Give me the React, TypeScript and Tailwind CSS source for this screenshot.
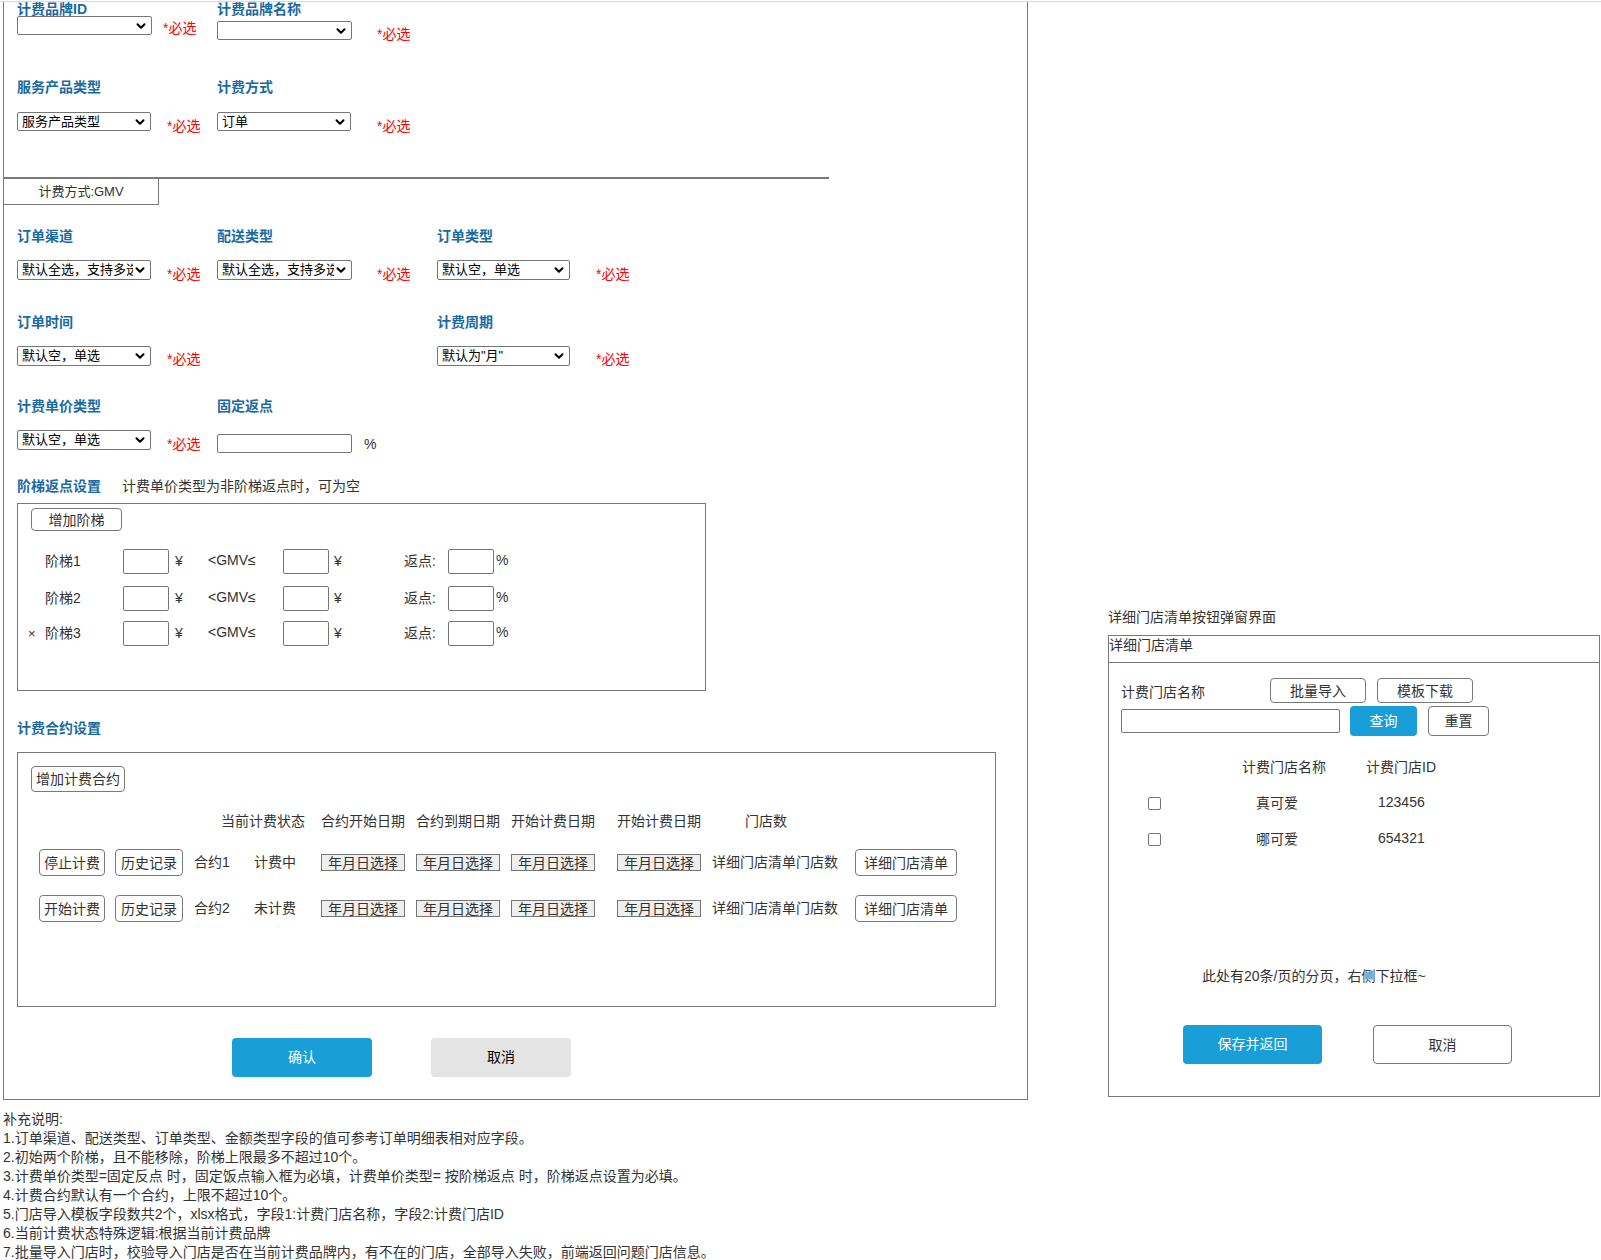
import { ChevronDown } from 'lucide-react';

const font = "font-['Liberation_Sans','Noto_Sans_CJK_SC',sans-serif]";

function Select({ text, className }: { text?: string; className: string }) {
  return (
    <div
      className={`flex items-center shrink-0 border border-[#767676] rounded-[2px] bg-white text-[13px] text-black ${className}`}
    >
      <span className="flex-1 min-w-0 overflow-hidden whitespace-nowrap pl-[4px] leading-[16px]">{text}</span>
      <ChevronDown className="w-[14px] h-[14px] shrink-0 mr-[3px] text-black" strokeWidth={3.5} />
    </div>
  );
}

function Req({ className = '' }: { className?: string }) {
  return <span className={`shrink-0 text-[14px] leading-[18px] text-[#ff0000] ${className}`}>*必选</span>;
}

function Label({ children, className = '' }: { children: React.ReactNode; className?: string }) {
  return <div className={`text-[14px] font-bold text-[#1a6aa2] ${className}`}>{children}</div>;
}

function Btn({ children, className = '' }: { children: React.ReactNode; className?: string }) {
  return (
    <div
      className={`flex items-center justify-center shrink-0 border border-[#797979] rounded-[4px] bg-white text-[14px] text-[#333333] leading-none ${className}`}
    >
      {children}
    </div>
  );
}

function DateBox() {
  return (
    <div className="flex items-center justify-center shrink-0 w-[84px] h-[17px] border border-[#767676] bg-[#efefef] text-[14px] leading-none text-[#333333]">
      年月日选择
    </div>
  );
}

function StepRow({ name, removable, className }: { name: string; removable?: boolean; className: string }) {
  return (
    <div className={`flex items-center h-[25px] text-[14px] text-[#333333] ${className}`}>
      <span className="w-[27px] pl-[10px] text-[13px]">{removable ? '×' : ''}</span>
      <span className="w-[78px]">{name}</span>
      <input className="w-[46px] h-[25px] border border-[#767676] rounded-[2px] bg-white" />
      <span className="w-[39px] pl-[6px]">¥</span>
      <span className="w-[75px] -mt-[3px]">&lt;GMV≤</span>
      <input className="w-[46px] h-[25px] border border-[#767676] rounded-[2px] bg-white" />
      <span className="w-[75px] pl-[5px]">¥</span>
      <span className="w-[44px]">返点:</span>
      <input className="w-[46px] h-[25px] border border-[#767676] rounded-[2px] bg-white" />
      <span className="pl-[2px] -mt-[3px]">%</span>
    </div>
  );
}

function ContractRow({ action, name, status, className }: { action: string; name: string; status: string; className: string }) {
  return (
    <div className={`flex items-center h-[27px] pl-[21px] text-[14px] text-[#333333] ${className}`}>
      <Btn className="w-[66px] h-[27px]">{action}</Btn>
      <Btn className="w-[68px] h-[27px] ml-[10px]">历史记录</Btn>
      <span className="w-[71px] pl-[11px] shrink-0">{name}</span>
      <span className="w-[67px] shrink-0">{status}</span>
      <DateBox />
      <span className="w-[11px] shrink-0" />
      <DateBox />
      <span className="w-[11px] shrink-0" />
      <DateBox />
      <span className="w-[22px] shrink-0" />
      <DateBox />
      <span className="w-[11px] shrink-0" />
      <span className="w-[143px] shrink-0 whitespace-nowrap">详细门店清单门店数</span>
      <Btn className="w-[102px] h-[27px]">详细门店清单</Btn>
    </div>
  );
}

const notes = [
  '补充说明:',
  '1.订单渠道、配送类型、订单类型、金额类型字段的值可参考订单明细表相对应字段。',
  '2.初始两个阶梯，且不能移除，阶梯上限最多不超过10个。',
  '3.计费单价类型=固定反点 时，固定饭点输入框为必填，计费单价类型= 按阶梯返点 时，阶梯返点设置为必填。',
  '4.计费合约默认有一个合约，上限不超过10个。',
  '5.门店导入模板字段数共2个，xlsx格式，字段1:计费门店名称，字段2:计费门店ID',
  '6.当前计费状态特殊逻辑:根据当前计费品牌',
  '7.批量导入门店时，校验导入门店是否在当前计费品牌内，有不在的门店，全部导入失败，前端返回问题门店信息。',
];

export default function App() {
  return (
    <div className={`w-[1601px] min-h-[1260px] bg-white text-[#333333] pt-px ${font}`}>
      <div className="h-px bg-[#d9d9d9]" />
      <div className="flex items-start">
        {/* main form frame */}
        <div className="ml-[3px] w-[1025px] h-[1098px] border-l border-r border-b border-[#797979] shrink-0">
          {/* row A */}
          <div className="flex h-[76px] pl-[13px]">
            <div className="w-[200px]">
              <Label className="leading-[14px]">计费品牌ID</Label>
              <div className="flex items-start">
                <Select className="w-[135px] h-[19px]" />
                <Req className="mt-[3px] ml-[11px]" />
              </div>
            </div>
            <div className="w-[220px]">
              <Label className="leading-[14px]">计费品牌名称</Label>
              <div className="flex items-start mt-[5px]">
                <Select className="w-[135px] h-[19px]" />
                <Req className="mt-[4px] ml-[25px]" />
              </div>
            </div>
          </div>

          {/* row B */}
          <div className="flex h-[99px] pl-[13px]">
            <div className="w-[200px]">
              <Label className="leading-[18px]">服务产品类型</Label>
              <div className="flex items-start mt-[16px]">
                <Select className="w-[134px] h-[19px]" text="服务产品类型" />
                <Req className="mt-[5px] ml-[16px]" />
              </div>
            </div>
            <div className="w-[220px]">
              <Label className="leading-[18px]">计费方式</Label>
              <div className="flex items-start mt-[16px]">
                <Select className="w-[134px] h-[19px]" text="订单" />
                <Req className="mt-[5px] ml-[26px]" />
              </div>
            </div>
          </div>

          <div className="h-[2px] w-[825px] bg-[#797979]" />
          <div className="flex items-center justify-center w-[155px] h-[26px] border-r border-b border-[#797979] text-[13px] text-[#333333]">
            计费方式:GMV
          </div>

          {/* row C */}
          <div className="flex h-[86px] pl-[13px] mt-[22px]">
            <div className="w-[200px]">
              <Label className="leading-[18px]">订单渠道</Label>
              <div className="flex items-start mt-[15px]">
                <Select className="w-[134px] h-[20px]" text="默认全选，支持多选" />
                <Req className="mt-[5px] ml-[16px]" />
              </div>
            </div>
            <div className="w-[220px]">
              <Label className="leading-[18px]">配送类型</Label>
              <div className="flex items-start mt-[15px]">
                <Select className="w-[135px] h-[20px]" text="默认全选，支持多选" />
                <Req className="mt-[5px] ml-[25px]" />
              </div>
            </div>
            <div className="w-[220px]">
              <Label className="leading-[18px]">订单类型</Label>
              <div className="flex items-start mt-[15px]">
                <Select className="w-[133px] h-[20px]" text="默认空，单选" />
                <Req className="mt-[5px] ml-[26px]" />
              </div>
            </div>
          </div>

          {/* row D */}
          <div className="flex h-[84px] pl-[13px]">
            <div className="w-[420px]">
              <Label className="leading-[18px]">订单时间</Label>
              <div className="flex items-start mt-[15px]">
                <Select className="w-[134px] h-[20px]" text="默认空，单选" />
                <Req className="mt-[4px] ml-[16px]" />
              </div>
            </div>
            <div className="w-[220px]">
              <Label className="leading-[18px]">计费周期</Label>
              <div className="flex items-start mt-[15px]">
                <Select className="w-[133px] h-[20px]" text={'默认为"月"'} />
                <Req className="mt-[4px] ml-[26px]" />
              </div>
            </div>
          </div>

          {/* row E */}
          <div className="flex h-[80px] pl-[13px]">
            <div className="w-[200px]">
              <Label className="leading-[18px]">计费单价类型</Label>
              <div className="flex items-start mt-[15px]">
                <Select className="w-[134px] h-[20px]" text="默认空，单选" />
                <Req className="mt-[5px] ml-[16px]" />
              </div>
            </div>
            <div className="w-[220px]">
              <Label className="leading-[18px]">固定返点</Label>
              <div className="flex items-start mt-[19px]">
                <input className="w-[135px] h-[19px] border border-[#767676] rounded-[2px] bg-white shrink-0" />
                <span className="ml-[12px] mt-[1px] text-[14px] leading-[18px] text-[#333333]">%</span>
              </div>
            </div>
          </div>

          {/* step rebate */}
          <div className="flex items-center h-[18px] pl-[13px] text-[14px] leading-[18px]">
            <Label className="leading-[18px] w-[105px]">阶梯返点设置</Label>
            <span className="text-[#333333]">计费单价类型为非阶梯返点时，可为空</span>
          </div>
          <div className="ml-[13px] mt-[8px] w-[689px] h-[188px] border border-[#797979]">
            <Btn className="ml-[13px] mt-[4px] w-[91px] h-[23px]">增加阶梯</Btn>
            <StepRow name="阶梯1" className="mt-[18px]" />
            <StepRow name="阶梯2" className="mt-[12px]" />
            <StepRow name="阶梯3" removable className="mt-[10px]" />
          </div>

          {/* contracts */}
          <Label className="leading-[18px] ml-[13px] mt-[28px]">计费合约设置</Label>
          <div className="ml-[13px] mt-[15px] w-[979px] h-[255px] border border-[#797979]">
            <Btn className="ml-[13px] mt-[13px] w-[94px] h-[26px]">增加计费合约</Btn>
            <div className="flex mt-[20px] pl-[203px] text-[14px] leading-[18px] text-[#333333] whitespace-nowrap">
              <span className="w-[100px] shrink-0">当前计费状态</span>
              <span className="w-[95px] shrink-0">合约开始日期</span>
              <span className="w-[95px] shrink-0">合约到期日期</span>
              <span className="w-[106px] shrink-0">开始计费日期</span>
              <span className="w-[128px] shrink-0">开始计费日期</span>
              <span className="shrink-0">门店数</span>
            </div>
            <ContractRow action="停止计费" name="合约1" status="计费中" className="mt-[19px]" />
            <ContractRow action="开始计费" name="合约2" status="未计费" className="mt-[19px]" />
          </div>

          <div className="flex mt-[31px] ml-[228px]">
            <div className="flex items-center justify-center w-[140px] h-[39px] rounded-[4px] bg-[#199ed8] text-[14px] text-white">
              确认
            </div>
            <div className="flex items-center justify-center ml-[59px] w-[140px] h-[39px] rounded-[4px] bg-[#e4e4e4] text-[14px] text-black">
              取消
            </div>
          </div>
        </div>

        {/* popup mock */}
        <div className="ml-[80px] mt-[606px] w-[492px] shrink-0">
          <div className="text-[14px] leading-[18px] text-[#333333]">详细门店清单按钮弹窗界面</div>
          <div className="mt-[9px] w-[492px] h-[462px] border border-[#797979] text-[14px] text-[#333333]">
            <div className="h-[27px] border-b border-[#797979] leading-[18px]">详细门店清单</div>
            <div className="flex items-start mt-[15px] pl-[12px]">
              <span className="w-[149px] mt-[5px] leading-[18px] shrink-0">计费门店名称</span>
              <Btn className="w-[96px] h-[25px]">批量导入</Btn>
              <Btn className="w-[96px] h-[25px] ml-[11px]">模板下载</Btn>
            </div>
            <div className="flex items-start mt-[3px] pl-[12px]">
              <input className="mt-[3px] w-[219px] h-[24px] border border-[#767676] rounded-[2px] bg-white shrink-0" />
              <div className="flex items-center justify-center ml-[10px] w-[67px] h-[30px] rounded-[4px] bg-[#199ed8] text-white shrink-0">
                查询
              </div>
              <Btn className="w-[61px] h-[30px] ml-[11px]">重置</Btn>
            </div>
            <div className="flex mt-[22px] pl-[133px] leading-[18px]">
              <span className="w-[124px] shrink-0">计费门店名称</span>
              <span>计费门店ID</span>
            </div>
            <div className="flex items-center h-[18px] mt-[18px] pl-[39px]">
              <span className="w-[13px] h-[13px] border border-[#767676] rounded-[2px] bg-white shrink-0" />
              <span className="ml-[95px] w-[122px] shrink-0 leading-[18px]">真可爱</span>
              <span className="-mt-[3px] leading-[18px]">123456</span>
            </div>
            <div className="flex items-center h-[18px] mt-[18px] pl-[39px]">
              <span className="w-[13px] h-[13px] border border-[#767676] rounded-[2px] bg-white shrink-0" />
              <span className="ml-[95px] w-[122px] shrink-0 leading-[18px]">哪可爱</span>
              <span className="-mt-[3px] leading-[18px]">654321</span>
            </div>
            <div className="mt-[119px] pl-[93px] leading-[18px]">此处有20条/页的分页，右侧下拉框~</div>
            <div className="flex mt-[40px] pl-[74px]">
              <div className="flex items-center justify-center w-[139px] h-[39px] rounded-[4px] bg-[#199ed8] text-white">
                保存并返回
              </div>
              <Btn className="ml-[51px] w-[139px] h-[39px]">取消</Btn>
            </div>
          </div>
        </div>
      </div>

      {/* notes */}
      <div className="mt-[10px] pl-[3px] text-[14px] leading-[19px] text-[#333333]">
        {notes.map((n) => (
          <div key={n} className="whitespace-nowrap">
            {n}
          </div>
        ))}
      </div>
    </div>
  );
}
